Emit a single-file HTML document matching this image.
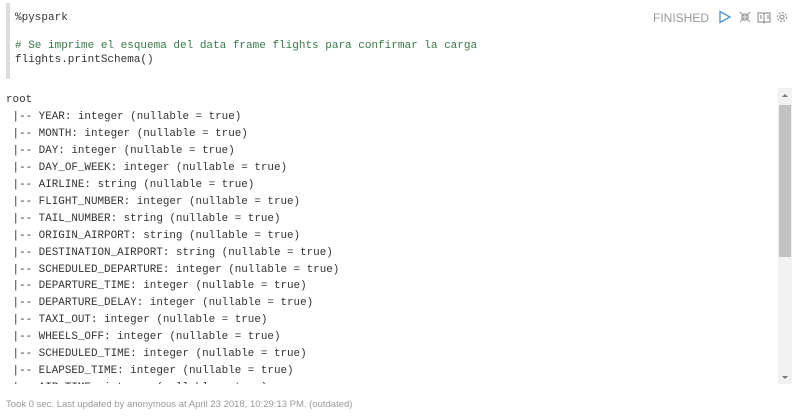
<!DOCTYPE html>
<html><head><style>
body{margin:0;width:802px;height:418px;background:#fff;position:relative;overflow:hidden;font-family:"Liberation Mono",monospace;}
.code{position:absolute;left:6px;top:3px;width:4px;height:76px;background:#ddd;}
.ct{position:absolute;left:15px;font-size:11px;color:#333;white-space:pre;line-height:14px;}
.cm{color:#3a7a4a;}
.hdr{position:absolute;left:653px;top:11px;font-family:"Liberation Sans",sans-serif;font-size:12px;color:#999;}
.out{position:absolute;left:6px;top:92px;font-size:10.9px;line-height:16.95px;color:#333;white-space:pre;height:292px;overflow:hidden;width:770px;}
.sb{position:absolute;left:778px;top:88px;width:14px;height:296px;background:#f1f1f1;}
.th{position:absolute;left:779px;top:105px;width:12px;height:152px;background:#c1c1c1;}
.foot{position:absolute;left:6px;top:399px;font-family:"Liberation Sans",sans-serif;font-size:9.5px;color:#999;}
</style></head><body>
<div class="code"></div>
<div class="ct" style="top:11px">%pyspark</div>
<div class="ct cm" style="top:39px">#&nbsp;Se imprime el esquema del data frame flights para confirmar la carga</div>
<div class="ct" style="top:53px">flights.printSchema()</div>
<div class="hdr">FINISHED</div>
<svg style="position:absolute;left:718px;top:10px" width="76" height="14" viewBox="0 0 76 14">
<path d="M2 1.5 L12 7 L2 12.5 Z" fill="none" stroke="#4a90d0" stroke-width="1.3"/>
<g stroke="#999" stroke-width="1.2" fill="none"><path d="M22 2l4 4M26 3v3h-3M32 2l-4 4M28 3v3h3M22 12l4-4M26 11V8h-3M32 12l-4-4M28 11V8h3"/>
<path d="M40 3h5l1 1 1-1h5v9h-5l-1 1-1-1h-5zM46 4v8M42 6h2M42 8h2M49 6h2M49 8h2"/>
<circle cx="64" cy="7" r="2"/><circle cx="64" cy="7" r="4.5" stroke-dasharray="2 1.5"/></g>
</svg>
<div class="out">root
 |-- YEAR: integer (nullable = true)
 |-- MONTH: integer (nullable = true)
 |-- DAY: integer (nullable = true)
 |-- DAY_OF_WEEK: integer (nullable = true)
 |-- AIRLINE: string (nullable = true)
 |-- FLIGHT_NUMBER: integer (nullable = true)
 |-- TAIL_NUMBER: string (nullable = true)
 |-- ORIGIN_AIRPORT: string (nullable = true)
 |-- DESTINATION_AIRPORT: string (nullable = true)
 |-- SCHEDULED_DEPARTURE: integer (nullable = true)
 |-- DEPARTURE_TIME: integer (nullable = true)
 |-- DEPARTURE_DELAY: integer (nullable = true)
 |-- TAXI_OUT: integer (nullable = true)
 |-- WHEELS_OFF: integer (nullable = true)
 |-- SCHEDULED_TIME: integer (nullable = true)
 |-- ELAPSED_TIME: integer (nullable = true)
 |-- AIR_TIME: integer (nullable = true)</div>
<div class="sb"></div><div class="th"></div>
<svg style="position:absolute;left:778px;top:90px" width="14" height="294"><path d="M4 7l3-3 3 3z" fill="#777"/><path d="M4 286l3 3 3-3z" fill="#777"/></svg>
<div class="foot">Took 0 sec. Last updated by anonymous at April 23 2018, 10:29:13 PM. (outdated)</div>
</body></html>
